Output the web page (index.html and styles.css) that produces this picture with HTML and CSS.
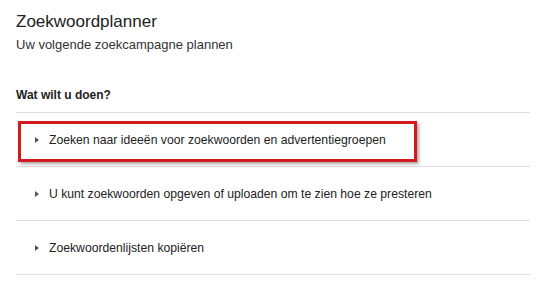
FILE: index.html
```html
<!DOCTYPE html>
<html lang="nl">
    <head>
        <meta charset="utf-8">
        <link rel="stylesheet" href="styles.css">
    </head>
    <body>
        <div class="planner">
            <h1 class="planner-title">Zoekwoordplanner</h1>
            <p class="planner-sub">Uw volgende zoekcampagne plannen</p>
            <h2 class="planner-question">Wat wilt u doen?</h2>
            <ul class="option-list">
                <li class="option highlight">
                    <span class="option-arrow"></span>Zoeken naar ideeën voor zoekwoorden en advertentiegroepen
                    <div class="mark-box"></div>
                </li>
                <li class="option">
                    <span class="option-arrow"></span>U kunt zoekwoorden opgeven of uploaden om te zien hoe ze presteren
                </li>
                <li class="option">
                    <span class="option-arrow"></span>Zoekwoordenlijsten kopiëren
                </li>
            </ul>
        </div>
    </body>
</html>
```

FILE: styles.css
```css
body {
    margin: 0;
    background: #fff;
    font-family: "Liberation Sans", Arial, sans-serif;
    color: #222;
}
.planner {
    width: 514px;
    padding: 11px 0 0 16px;
}
.planner-title {
    margin: 0;
    font-size: 17px;
    font-weight: normal;
    line-height: 22px;
}
.planner-sub {
    margin: 3px 0 0;
    font-size: 13px;
    line-height: 18px;
    color: #333;
}
.planner-question {
    margin: 33px 0 0;
    font-size: 12px;
    font-weight: bold;
    line-height: 16px;
}
.option-list {
    list-style: none;
    margin: 9px 0 0;
    padding: 0;
    border-top: 1px solid #ddd;
}
.option {
    position: relative;
    display: flex;
    align-items: center;
    height: 53px;
    padding-left: 19px;
    border-bottom: 1px solid #ddd;
    font-size: 12.2px;
}
.option-arrow {
    width: 0;
    height: 0;
    margin-right: 10px;
    border-top: 3px solid transparent;
    border-bottom: 3px solid transparent;
    border-left: 4px solid #555;
}
.mark-box {
    position: absolute;
    left: 2px;
    top: 8px;
    width: 393px;
    height: 35px;
    border: 3px solid #d3191d;
    box-shadow: 2px 2px 3px rgba(0, 0, 0, 0.35);
}
```
